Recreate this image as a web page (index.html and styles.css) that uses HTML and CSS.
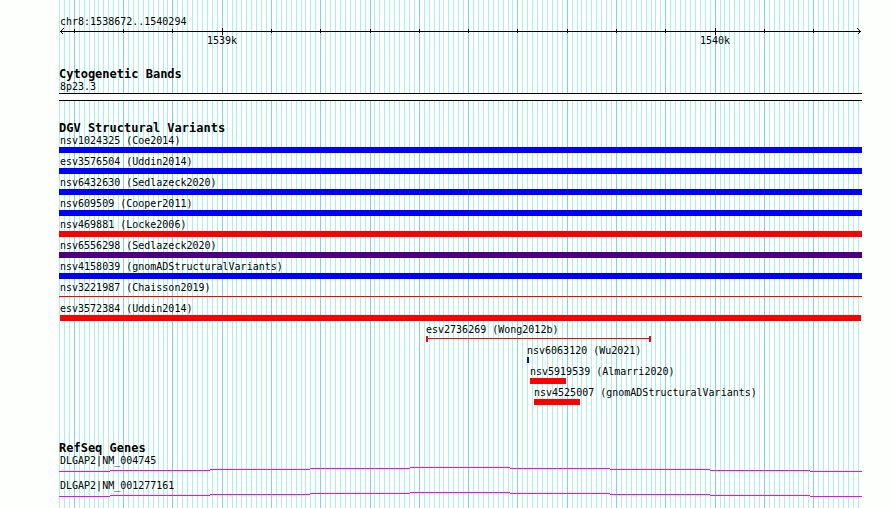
FILE: index.html
```
<!DOCTYPE html>
<html lang="en">
<head>
    <meta charset="UTF-8">
    <meta name="viewport" content="width=device-width, initial-scale=1.0">
    <title>chr8:1538672..1540294</title>
    <link rel="stylesheet" href="styles.css">
</head>

<body>
    <main class="panel" id="panel">
        <svg class="grid" id="grid" aria-hidden="true"></svg>

        <section class="ruler">
            <div class="label">chr8:1538672..1540294</div>
            <svg class="axis" id="axis" aria-hidden="true"></svg>
            <div class="ticks">
                <span class="tick" data-pos="1539000">1539k</span>
                <span class="tick" data-pos="1540000">1540k</span>
            </div>
        </section>

        <section class="track">
            <h2>Cytogenetic Bands</h2>
            <div class="label">8p23.3</div>
            <div class="band"></div>
        </section>

        <section class="track">
            <h2>DGV Structural Variants</h2>
            <ul class="features">
                <li><div class="label">nsv1024325 (Coe2014)</div><div class="bar gain"></div></li>
                <li><div class="label">esv3576504 (Uddin2014)</div><div class="bar gain"></div></li>
                <li><div class="label">nsv6432630 (Sedlazeck2020)</div><div class="bar gain"></div></li>
                <li><div class="label">nsv609509 (Cooper2011)</div><div class="bar gain"></div></li>
                <li><div class="label">nsv469881 (Locke2006)</div><div class="bar loss"></div></li>
                <li><div class="label">nsv6556298 (Sedlazeck2020)</div><div class="bar inversion"></div></li>
                <li><div class="label">nsv4158039 (gnomADStructuralVariants)</div><div class="bar gain"></div></li>
                <li><div class="label">nsv3221987 (Chaisson2019)</div><div class="bar span"></div></li>
                <li><div class="label">esv3572384 (Uddin2014)</div><div class="bar loss" data-start="1538671" data-end="1540297"></div></li>
                <li class="short"><div class="label" data-start="1539414">esv2736269 (Wong2012b)</div><div class="bar span capped" data-start="1539414" data-end="1539871"></div></li>
                <li class="short"><div class="label" data-start="1539619">nsv6063120 (Wu2021)</div><div class="bar gain" data-start="1539619" data-end="1539623"></div></li>
                <li class="short"><div class="label" data-start="1539625">nsv5919539 (Almarri2020)</div><div class="bar loss" data-start="1539625" data-end="1539698"></div></li>
                <li class="short"><div class="label" data-start="1539633">nsv4525007 (gnomADStructuralVariants)</div><div class="bar loss" data-start="1539633" data-end="1539727"></div></li>
            </ul>
        </section>

        <section class="track genes">
            <h2>RefSeq Genes</h2>
            <div class="gene">
                <div class="label">DLGAP2|NM_004745</div>
                <svg class="intron" viewBox="0 0 803 5" preserveAspectRatio="none" aria-hidden="true">
                    <path d="M0 4h51v1h-51zM51 3h100v1h-100zM151 2h100v1h-100zM251 1h100v1h-100zM351 0h100v1h-100zM451 1h100v1h-100zM551 2h100v1h-100zM651 3h100v1h-100zM751 4h52v1h-52z"/>
                </svg>
            </div>
            <div class="gene">
                <div class="label">DLGAP2|NM_001277161</div>
                <svg class="intron" viewBox="0 0 803 5" preserveAspectRatio="none" aria-hidden="true">
                    <path d="M0 4h51v1h-51zM51 3h100v1h-100zM151 2h100v1h-100zM251 1h100v1h-100zM351 0h100v1h-100zM451 1h100v1h-100zM551 2h100v1h-100zM651 3h100v1h-100zM751 4h52v1h-52z"/>
                </svg>
            </div>
        </section>
    </main>

    <script src="script.js"></script>
</body>
</html>
```

FILE: styles.css
```
body {
    margin: 0;
    background-color: #fdfffd;
    color: #000;
    font-family: "DejaVu Sans Mono", "Liberation Mono", monospace;
    font-size: 10px;
    line-height: 13px;
}

.panel {
    position: relative;
    box-sizing: border-box;
    min-height: 100vh;
    margin: 0 28px 0 59px;
    padding-top: 15px;
}

/* vertical guide lines behind all the tracks */
.grid {
    position: absolute;
    top: 0;
    left: 0;
    width: 100%;
    height: 100%;
    z-index: -1;
}

.grid .minor {
    fill: #afeeee;
}

.grid .major {
    fill: #87ceeb;
}

.label {
    padding-left: 1px;
    white-space: nowrap;
}

.ruler {
    margin-bottom: 21px;
}

.axis {
    display: block;
    width: 100%;
    height: 7px;
    shape-rendering: crispEdges;
}

.axis path {
    fill: none;
    stroke: #000;
}

.ticks {
    position: relative;
    height: 12px;
    line-height: 12px;
}

.tick {
    position: absolute;
    top: 0;
    transform: translateX(-50%);
}

.track {
    margin-bottom: 21px;
}

h2 {
    margin: 0;
    font-size: 12px;
    line-height: 12px;
    white-space: nowrap;
}

.band {
    height: 6px;
    border-top: 1px solid #000;
    border-bottom: 1px solid #000;
    background-color: #fdfffd;
}

.features {
    list-style-type: none;
    margin: 0;
    padding: 0;
}

.features li {
    padding-bottom: 2px;
}

.short .label {
    padding-left: 0;
}

.bar {
    height: 6px;
}

.gain {
    background-color: #0000ff;
}

.loss {
    background-color: #ff0000;
}

.inversion {
    background-color: #4b0082;
}

/* thin line through the middle of the row */
.span {
    box-sizing: border-box;
    background: linear-gradient(#ff0000, #ff0000) 0 2px / 100% 1px no-repeat;
}

.capped {
    border-left: 2px solid #ff0000;
    border-right: 2px solid #ff0000;
}

.genes {
    margin-top: 35px;
    margin-bottom: 0;
}

.gene {
    padding-bottom: 7px;
}

.intron {
    display: block;
    width: 100%;
    height: 5px;
    fill: #ff00ff;
    shape-rendering: crispEdges;
}
```

FILE: script.js
```
const START = 1538671;
const END = 1540294;

const panel = document.getElementById('panel');
const grid = document.getElementById('grid');
const axis = document.getElementById('axis');

// Convert a base position to a pixel inside the panel
function toX(pos) {
    const scale = (panel.clientWidth - 3) / (END - START);
    return 1 + Math.floor((pos - START) * scale);
}

function draw() {
    const right = panel.clientWidth - 1;
    let lines = '';
    let path = `M1 3.5H${right}M4.5 0.5L1.5 3.5L4.5 6.5M${right - 3.5} 0.5L${right - 0.5} 3.5L${right - 3.5} 6.5`;

    for (let pos = 1538670; pos <= END; pos += 10) {
        const x = toX(pos);
        const type = pos % 100 === 0 ? 'major' : 'minor';
        lines += `<rect class="${type}" x="${x}" y="0" width="1" height="100%"/>`;

        if (pos % 1000 === 0) {
            path += `M${x + 0.5} 0V7`;
        } else if (type === 'major') {
            path += `M${x + 0.5} 1V5`;
        }
    }

    grid.innerHTML = lines;
    axis.innerHTML = `<path d="${path}"/>`;

    document.querySelectorAll('.tick').forEach(tick => {
        tick.style.left = toX(Number(tick.dataset.pos)) + 'px';
    });

    document.querySelectorAll('[data-start]').forEach(item => {
        const left = toX(Number(item.dataset.start));
        item.style.marginLeft = left + 'px';
        if (item.dataset.end) {
            item.style.width = toX(Number(item.dataset.end)) - left + 'px';
        }
    });
}

draw();
window.addEventListener('resize', draw);
```
